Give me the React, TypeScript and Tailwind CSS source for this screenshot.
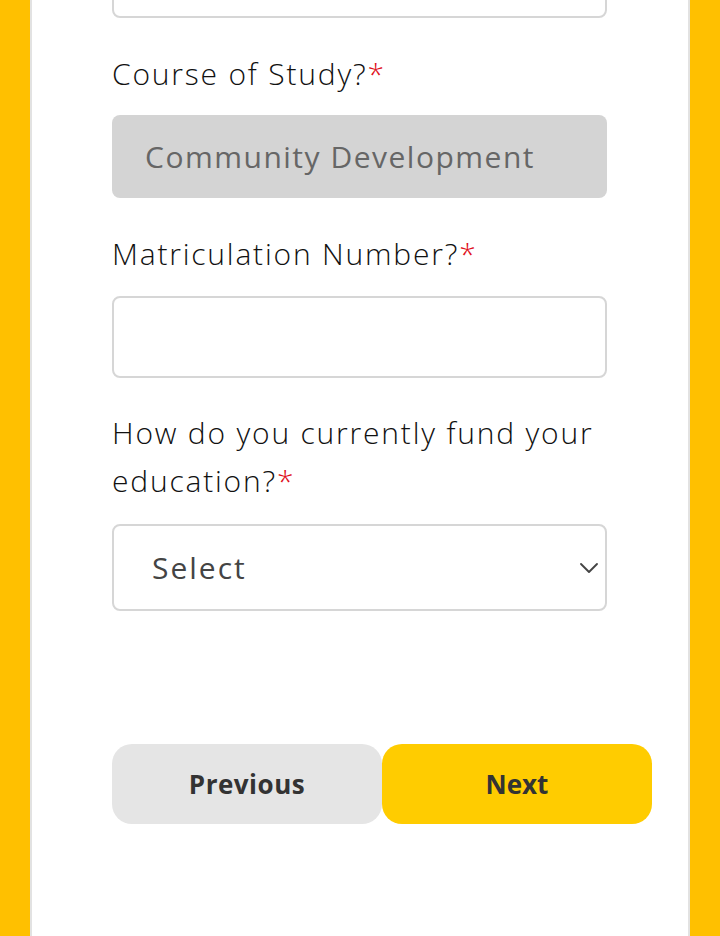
import { ChevronDown } from "lucide-react"

const font = { fontFamily: '"Open Sans", "Liberation Sans", sans-serif' }

function Label({ children }: { children: React.ReactNode }) {
  return (
    <label className="block text-[30px] leading-[48px] font-light text-[#111] tracking-[1.8px]">
      {children}
      <span className="text-[#e0101b]">*</span>
    </label>
  )
}

export default function App() {
  return (
    <div className="h-[936px] overflow-hidden bg-[#ffc000]" style={font}>
      <div className="mx-[30px] h-full flow-root bg-white border-x-2 border-[#e2e2e2]">
        <div className="-mt-[64px] pl-[80px] pr-[81px]">
          {/* previous field (cut off) */}
          <div className="h-[82px] rounded-lg border-2 border-[#d6d6d6]" />

          <div className="mt-8">
            <Label>Course of Study?</Label>
            <div className="mt-[17px] h-[83px] rounded-lg bg-[#d4d4d4] pl-[33px] flex items-center text-[30px] font-medium tracking-[1.5px] text-[#666]">
              Community Development
            </div>
          </div>

          <div className="mt-8">
            <Label>Matriculation Number?</Label>
            <input className="mt-[18px] block w-full h-[82px] rounded-lg border-2 border-[#d6d6d6] outline-none" />
          </div>

          <div className="mt-[31px]">
            <Label>How do you currently fund your education?</Label>
            <div className="mt-[19px] h-[87px] rounded-lg border-2 border-[#d6d6d6] pl-[38px] flex items-center justify-between">
              <span className="text-[30px] font-medium tracking-[2px] text-[#444]">Select</span>
              <ChevronDown className="h-8 w-8 text-[#444]" strokeWidth={1.4} />
            </div>
          </div>
        </div>

        <div className="mt-[133px] ml-[80px] flex w-[540px]">
          <button className="h-20 flex-1 rounded-[20px] bg-[#e5e5e5] text-[26px] font-bold tracking-[0.5px] text-[#333]">
            Previous
          </button>
          <button className="h-20 flex-1 rounded-[20px] bg-[#ffcc00] text-[26px] font-bold text-[#333]">
            Next
          </button>
        </div>
      </div>
    </div>
  )
}
